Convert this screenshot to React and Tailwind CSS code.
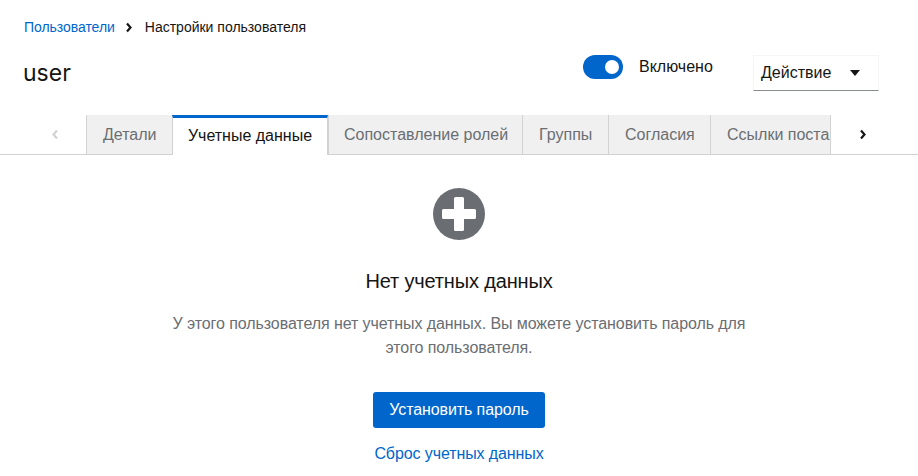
import React from 'react';

const tabs = [
  { label: 'Детали', width: 'w-[86px]', inset: 'pl-[16px]' },
  { label: 'Учетные данные', width: 'w-[156px]', active: true },
  { label: 'Сопоставление ролей', width: 'w-[194px]', inset: 'pl-[15px]' },
  { label: 'Группы', width: 'w-[86px]', inset: 'pl-[16px]' },
  { label: 'Согласия', width: 'w-[102px]', inset: 'pl-[16px]' },
  { label: 'Ссылки поставщиков', width: 'w-[120px]', inset: 'pl-[16px]' },
];

function Chevron({ left, className }) {
  return (
    <svg width="8" height="11" viewBox="0 0 8 11" className={className}>
      <path
        d={left ? 'M6 1.5 L2.5 5.5 L6 9.5' : 'M2 1.5 L5.5 5.5 L2 9.5'}
        fill="none"
        stroke="currentColor"
        strokeWidth="2.2"
      />
    </svg>
  );
}

export default function App() {
  return (
    <div className="w-[918px] h-[476px] overflow-hidden bg-white font-['Liberation_Sans',sans-serif] text-[#151515]">
      {/* Breadcrumb */}
      <div className="flex items-center h-[20px] mt-[17px] ml-[24px] text-[14px]">
        <span className="text-[#06c] tracking-[-0.05px]">Пользователи</span>
        <Chevron className="ml-[10px] mr-[12px] text-[#151515]" />
        <span>Настройки пользователя</span>
      </div>

      {/* Title row */}
      <div className="flex items-start h-[60px] pl-[23px] mt-[18px]">
        <h1 className="text-[23px] leading-[36px] font-['Inter','Roboto',sans-serif] w-[560px]">user</h1>
        <div className="w-[40px] h-[24px] rounded-full bg-[#06c] flex items-center justify-end pr-[4px]">
          <div className="w-[14px] h-[14px] rounded-full bg-white" />
        </div>
        <span className="ml-[16px] text-[16px] leading-[24px] w-[114px]">Включено</span>
        <div className="w-[126px] h-[36px] flex items-center justify-between pl-[7px] pr-[18px] border border-[#f5f5f5] border-b-[#8a8d90] text-[16px]">
          <span>Действие</span>
          <svg width="10" height="6" viewBox="0 0 10 6"><path d="M0 0 H10 L5 6 Z" fill="#151515" /></svg>
        </div>
      </div>

      {/* Tabs */}
      <div className="flex h-[40px] border-b border-[#d2d2d2]">
        <div className="w-[86px] flex items-center justify-center pl-[24px] text-[#d2d2d2]">
          <Chevron left />
        </div>
        {tabs.map((tab) => (
          <div
            key={tab.label}
            className={
              tab.active
                ? `${tab.width} shrink-0 h-[40px] flex items-center justify-center pb-[2px] bg-white border-t-[3px] border-t-[#06c] border-x border-x-[#d2d2d2] text-[16px] text-[#151515]`
                : `${tab.width} ${tab.inset} shrink-0 h-[39px] flex items-center bg-[#f0f0f0] border-l border-[#d2d2d2] text-[16px] text-[#6a6e73] overflow-hidden whitespace-nowrap`
            }
          >
            {tab.label}
          </div>
        ))}
        <div className="flex-1 flex items-center justify-center border-l border-[#d2d2d2] pb-[1px] pr-[23px] text-[#151515]">
          <Chevron />
        </div>
      </div>

      {/* Empty state */}
      <div className="flex flex-col items-center">
        <svg width="52" height="52" viewBox="0 0 52 52" className="mt-[33px]">
          <circle cx="26" cy="26" r="26" fill="#6a6e73" />
          <path d="M21 10.5 a1.5 1.5 0 0 1 1.5 -1.5 h7 a1.5 1.5 0 0 1 1.5 1.5 V21 h10.5 a1.5 1.5 0 0 1 1.5 1.5 v7 a1.5 1.5 0 0 1 -1.5 1.5 H31 v10.5 a1.5 1.5 0 0 1 -1.5 1.5 h-7 a1.5 1.5 0 0 1 -1.5 -1.5 V31 H10.5 a1.5 1.5 0 0 1 -1.5 -1.5 v-7 a1.5 1.5 0 0 1 1.5 -1.5 H21 Z" fill="#fff" />
        </svg>
        <h2 className="mt-[26px] text-[20px] leading-[30px] tracking-[-0.15px]">Нет учетных данных</h2>
        <p className="mt-[16px] w-[600px] text-center text-[16px] leading-[24px] tracking-[-0.08px] text-[#6a6e73]">
          У этого пользователя нет учетных данных. Вы можете установить пароль для<br />этого пользователя.
        </p>
        <button className="mt-[32px] w-[172px] h-[36px] rounded-[3px] bg-[#06c] text-white text-[16px] tracking-[-0.1px]">
          Установить пароль
        </button>
        <button className="mt-[8px] h-[36px] text-[#06c] text-[16px] tracking-[-0.1px]">Сброс учетных данных</button>
      </div>
    </div>
  );
}
